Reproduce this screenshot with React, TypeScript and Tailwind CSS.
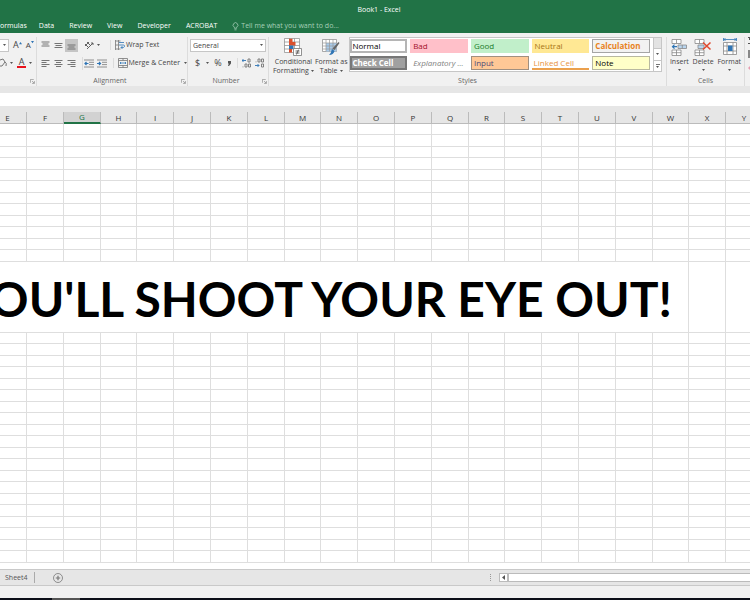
import type { ReactNode } from "react";

const TABS = ["Data", "Review", "View", "Developer", "ACROBAT"];
const COLUMNS = "EFGHIJKLMNOPQRSTUVWXY".split("");

const COL_WIDTHS = ["w-[37px]", "w-[37px]", "w-[37px]", "w-[36px]", "w-[37px]"];

function Caret() {
  return (
    <svg viewBox="0 0 5 3" className="h-[2px] w-[3px] shrink-0" aria-hidden="true">
      <path d="M0 0h5L2.5 3z" fill="#555" />
    </svg>
  );
}

function Launcher() {
  return (
    <button aria-label="More options" className="w-[6px]">
      <svg viewBox="0 0 6 6" className="size-[5px]" fill="none" stroke="#777" strokeWidth=".7">
        <path d="M.5 4.5v-4h4M2.5 2.5l2.5 2.5M5.3 2.5v2.8H2.5" />
      </svg>
    </button>
  );
}

function Lines({ rows, label, active }: { rows: string; label: string; active?: boolean }) {
  return (
    <button
      aria-label={label}
      className={`flex h-[13px] w-[13px] items-center justify-center ${active ? "bg-[#c5c5c5]" : ""}`}
    >
      <svg viewBox="0 0 9 9" className="size-[9px]" stroke="#666" strokeWidth=".9">
        <path d={rows} />
      </svg>
    </button>
  );
}

function Indent({ label, d }: { label: string; d: string }) {
  return (
    <button aria-label={label} className="flex h-[13px] w-[13px] items-center justify-center">
      <svg viewBox="0 0 10 9" className="h-[9px] w-[10px]" fill="none">
        <path d="M0 1h10M5 3.3h5M5 5.6h5M0 8h10" stroke="#777" strokeWidth=".8" />
        <path d={d} stroke="#2f75b5" strokeWidth="1.2" />
      </svg>
    </button>
  );
}

function GroupLabel({ children, launcher }: { children: ReactNode; launcher?: boolean }) {
  return (
    <div className="mt-auto flex h-[10px] items-center text-[#666]">
      <span className="flex-1 text-center">{children}</span>
      {launcher && <Launcher />}
    </div>
  );
}

function TitleBar() {
  return (
    <header className="bg-[#217346] text-white">
      <h1 className="h-[19px] pl-2 text-center leading-[20px]">Book1 - Excel</h1>
      <nav className="flex h-[14px] items-center whitespace-nowrap">
        <a href="#formulas" className="mr-3">ormulas</a>
        {TABS.map((tab) => (
          <a key={tab} href={`#${tab}`} className="mr-[15px]">
            {tab}
          </a>
        ))}
        <button className="flex items-center gap-[2px] text-[#a6cfb7]">
          <svg viewBox="0 0 8 10" className="h-[9px] w-[7px]" fill="none" stroke="currentColor" strokeWidth=".9">
            <path d="M2.7 7V5.8a2.7 2.7 0 1 1 2.6 0V7zM2.8 8.8h2.4" />
          </svg>
          Tell me what you want to do...
        </button>
      </nav>
    </header>
  );
}

function FontGroup() {
  return (
    <section className="flex w-[37px] shrink-0 flex-col border-r border-[#dcdcdc]">
      <div className="mt-px flex h-[14px] items-center">
        <button aria-label="Font size" className="mr-1 flex h-[13px] w-[9px] items-center justify-center border border-l-0 border-[#c6c6c6] bg-white">
          <Caret />
        </button>
        <button aria-label="Increase font size" className="mr-1 flex text-[9px]">
          A<svg viewBox="0 0 4 4" className="mt-[2px] size-[3px]" fill="#2f75b5"><path d="M0 3l2-3 2 3z" /></svg>
        </button>
        <button aria-label="Decrease font size" className="flex text-[8px]">
          A<svg viewBox="0 0 4 4" className="mt-[1px] size-[3px]" fill="#2f75b5"><path d="M0 0h4L2 3z" /></svg>
        </button>
      </div>
      <div className="mt-1 flex h-[14px] items-center gap-1">
        <button aria-label="Fill color" className="flex items-center gap-[3px]">
          <svg viewBox="0 0 7 10" className="h-[10px] w-[7px]" fill="none" stroke="#666" strokeWidth=".9">
            <path d="M0 2l3-1 2 3-3 4H0M5 4q2 1 1 4" />
          </svg>
          <Caret />
        </button>
        <button aria-label="Font color" className="flex items-center gap-[3px]">
          <span className="h-[10px] w-[9px] border-b-2 border-[#e8121d] text-center text-[9px] leading-[8px]">A</span>
          <Caret />
        </button>
      </div>
      <GroupLabel launcher>{null}</GroupLabel>
    </section>
  );
}

function AlignmentGroup() {
  return (
    <section className="flex w-[151px] shrink-0 flex-col border-r border-[#dcdcdc] pl-[2px]">
      <div className="mt-px flex h-[14px] items-center">
        <Lines label="Top align" rows="M.5 1h8M1.5 3h6M.5 5h8" />
        <Lines label="Middle align" rows="M.5 2.5h8M1.5 4.5h6M.5 6.5h8" />
        <Lines label="Bottom align" rows="M.5 4h8M1.5 6h6M.5 8h8" active />
        <button aria-label="Orientation" className="ml-1 flex w-[24px] items-center gap-[3px] pl-[2px]">
          <svg viewBox="0 0 10 9" className="h-[9px] w-[10px]" fill="none" stroke="#555" strokeWidth=".9">
            <path d="M1 3l3 3M3 1l4 4M1 5l4-4M3 8l6-6M9 4V2H7" />
          </svg>
          <Caret />
        </button>
        <button className="ml-1 flex items-center gap-px border-l border-[#dcdcdc] pl-1">
          <svg viewBox="0 0 10 10" className="size-[10px]" fill="none" stroke="#777" strokeWidth=".8">
            <path d="M.5 0v10M3.5 0v10M.5 1h5M.5 9h5M.5 5h3" />
            <path d="M4 2.5h5M4 5h4.5q1 0 1 1t-1 1.5H6M7.5 6L6 7.5 7.5 9" stroke="#2f75b5" />
          </svg>
          Wrap Text
        </button>
      </div>
      <div className="mt-1 flex h-[14px] items-center">
        <Lines label="Align left" rows="M.5 1.5h8M.5 3.5h5M.5 5.5h8M.5 7.5h5" />
        <Lines label="Center" rows="M.5 1.5h8M2 3.5h5M.5 5.5h8M2 7.5h5" />
        <Lines label="Align right" rows="M.5 1.5h8M3.5 3.5h5M.5 5.5h8M3.5 7.5h5" />
        <span className="ml-1 flex border-l border-[#dcdcdc]">
          <Indent label="Decrease indent" d="M4.5 4.5H1M2.5 3L1 4.5 2.5 6" />
          <Indent label="Increase indent" d="M0 4.5h3.5M2 3l1.5 1.5L2 6" />
        </span>
        <button className="ml-1 flex items-center gap-px border-l border-[#dcdcdc] pl-1">
          <svg viewBox="0 0 10 10" className="size-[10px]" fill="none" stroke="#777" strokeWidth=".8">
            <path d="M.5.5h9v9h-9zM5 .5v2M5 7.5v2M.5 2.5h9M.5 7.5h9" />
            <path d="M2 5h6M3 4L2 5l1 1M7 4l1 1-1 1" stroke="#2f75b5" />
          </svg>
          Merge &amp; Center
        </button>
        <button aria-label="Merge options" className="ml-1"><Caret /></button>
      </div>
      <GroupLabel launcher>Alignment</GroupLabel>
    </section>
  );
}

function NumberGroup() {
  return (
    <section className="flex w-[81px] shrink-0 flex-col border-r border-[#dcdcdc] pl-[2px]">
      <div className="relative mt-px mr-[2px] flex h-[14px] items-center">
        <select aria-label="Number format" className="h-[13px] w-full appearance-none border border-[#c6c6c6] bg-white pl-[2px] leading-[11px]">
          <option>General</option>
        </select>
        <span className="pointer-events-none absolute right-[3px] flex"><Caret /></span>
      </div>
      <div className="mt-1 flex h-[14px] items-center pl-[5px] text-[9px]">
        <button>$</button>
        <button aria-label="Currency options" className="ml-[6px]"><Caret /></button>
        <button className="ml-[5px]">%</button>
        <button aria-label="Comma style" className="ml-[6px]">
          <svg viewBox="0 0 3 5" className="h-[5px] w-[3px]"><path d="M0 0h3v2.500L1 5H0l.8-2.500H0z" fill="#555" /></svg>
        </button>
        <button aria-label="Increase decimal" className="ml-auto flex border-l border-[#dcdcdc] pl-1">
          <svg viewBox="0 0 9 10" className="h-[10px] w-[9px]" fill="none" stroke="#777" strokeWidth=".9">
            <path d="M0 2.5h4M1.5 1L0 2.5 1.5 4" stroke="#2f75b5" />
            <path d="M6 1h2v3H6zM3 6h2v3H3zM6.5 6h2v3h-2zM1 8.5v.8" />
          </svg>
        </button>
        <button aria-label="Decrease decimal" className="mx-1">
          <svg viewBox="0 0 9 10" className="h-[10px] w-[9px]" fill="none" stroke="#777" strokeWidth=".9">
            <path d="M3 1h2v3H3zM6.5 1h2v3h-2zM6.5 6h2v3h-2zM1 3.5v.8" />
            <path d="M0 7.5h4M2.5 6L4 7.5 2.5 9" stroke="#2f75b5" />
          </svg>
        </button>
      </div>
      <GroupLabel launcher>Number</GroupLabel>
    </section>
  );
}

function BigButton({ icon, lines, caret }: { icon: ReactNode; lines: string[]; caret?: boolean }) {
  return (
    <button className="flex shrink-0 flex-col items-center whitespace-nowrap">
      <span className="flex h-[20px] items-center">{icon}</span>
      {lines.map((line, i) => (
        <span key={line} className="flex h-[9px] items-center gap-[2px] leading-[9px]">
          {line}
          {!caret && i === lines.length - 1 && <Caret />}
        </span>
      ))}
      {caret && <span className="flex h-2 items-center"><Caret /></span>}
    </button>
  );
}

const ConditionalIcon = (
  <svg viewBox="0 0 18 18" className="size-[18px]">
    <path d="M.5.5h15v14H.5zM5.5.5v14M10.5.5v14M.5 4h15M.5 7.5h15M.5 11h15" fill="#fff" stroke="#888" strokeWidth=".7" />
    <path d="M5 .8h3.500v3.200H5zM5 4h6.500v3.500H5z" fill="#d9502e" />
    <path d="M5 7.500h4.500V11H5z" fill="#2f75b5" />
    <path d="M5 11h3v3.500H5z" fill="#d9502e" />
    <path d="M9.5 10.500h8v7h-8z" fill="#fff" stroke="#777" strokeWidth=".8" />
    <path d="M11.5 13h4M11.5 15h4M14.5 11.7l-2 4.800" stroke="#444" strokeWidth=".8" />
  </svg>
);

const FormatTableIcon = (
  <svg viewBox="0 0 18 18" className="size-[18px]">
    <path d="M.5 1.5h14v12H.5z" fill="#fff" stroke="#888" strokeWidth=".7" />
    <path d="M4 5h10.5v8.500H4z" fill="#a9cbea" />
    <path d="M4 1.5v12M7.5 1.5v12M11 1.5v12M.5 5h14M.5 8h14M.5 11h14" stroke="#999" strokeWidth=".7" />
    <path d="M16.500 4l1 1-5 7-2-1.500z" fill="#666" />
    <path d="M10 11l2.500 2q-1 4-5.500 4 2-1.500 3-6z" fill="#2f75b5" />
  </svg>
);

const InsertIcon = (
  <svg viewBox="0 0 16 17" className="h-[17px] w-4" fill="none" stroke="#888" strokeWidth=".8">
    <path d="M1 .5h9v4H1zM5.5.5v4M1 11h9v5.500H1zM5.500 11v5.500M1 13.700h9" fill="#fff" />
    <path d="M7 6h8.500v3.500H7zM11.300 6v3.500" fill="#b9d5ee" />
    <path d="M6 7.700H1.500M3.500 5.700l-2 2 2 2" stroke="#2f75b5" strokeWidth="1.200" />
  </svg>
);

const DeleteIcon = (
  <svg viewBox="0 0 18 17" className="h-[17px] w-[18px]" fill="none" stroke="#888" strokeWidth=".8">
    <path d="M1 .5h9v4H1zM5.5.5v4M1 11h9v5.500H1zM5.500 11v5.500M1 13.700h9" fill="#fff" />
    <path d="M4 6h6v3.500H4z" fill="#b9d5ee" />
    <path d="M9 3.500l7.500 7M16.500 3.500L9 10.500" stroke="#e0492f" strokeWidth="1.600" />
  </svg>
);

const FormatIcon = (
  <svg viewBox="0 0 17 18" className="h-[18px] w-[17px]" fill="none" stroke="#888" strokeWidth=".8">
    <path d="M2.500 4.500h13v12h-13zM6 4.500v12M12 4.500v12M2.500 8h13M2.500 13h13" fill="#fff" />
    <path d="M7 7.500h4.500V13H7z" fill="#2f75b5" stroke="none" />
    <path d="M3 1.500h12M4.500 0L3 1.500 4.500 3M13.500 0L15 1.500 13.500 3M2.500 0v3M15.500 0v3" stroke="#2f75b5" />
  </svg>
);

const STYLES = [
  { name: "Normal", look: "border-2 border-[#b5b5b5] bg-white text-black" },
  { name: "Bad", look: "border-2 border-[#ffc0c9] bg-[#ffc0c9] text-[#a3122a]" },
  { name: "Good", look: "border-2 border-[#c1efca] bg-[#c1efca] text-[#197a2a]" },
  { name: "Neutral", look: "border-2 border-[#ffe894] bg-[#ffe894] text-[#a87514]" },
  { name: "Calculation", look: "border border-[#a5a5a5] bg-[#f2f2f2] pl-[2px] font-bold text-[#e8821e]" },
  { name: "Check Cell", look: "border-2 border-[#777] bg-[#a0a0a0] font-bold text-white" },
  { name: "Explanatory ...", look: "border-2 border-white text-[#7f7f7f] italic" },
  { name: "Input", look: "border border-[#a08f80] bg-[#ffc896] pl-[2px] text-[#4e4a78]" },
  { name: "Linked Cell", look: "border-y-2 border-t-white border-b-[#eba04d] pl-[2px] text-[#e8933e]" },
  { name: "Note", look: "border border-[#b8b8a0] bg-[#ffffc8] pl-[2px] text-black" },
];

function StylesGroup() {
  return (
    <section className="flex min-w-0 flex-1 flex-col border-r border-[#dcdcdc]">
      <div className="flex gap-px pl-1">
        <BigButton icon={ConditionalIcon} lines={["Conditional", "Formatting"]} />
        <BigButton icon={FormatTableIcon} lines={["Format as", "Table"]} />
        <div className="mr-1 flex h-[35px] min-w-0 flex-1 border border-[#c6c6c6] bg-white">
          <div className="grid min-w-0 flex-1 grid-cols-5 content-start gap-x-[3px] gap-y-[3px] pt-px pr-[3px]">
            {STYLES.map((s) => (
              <button key={s.name} className={`h-[14px] truncate px-px text-left text-[8px] leading-[10px] ${s.look}`}>
                {s.name}
              </button>
            ))}
          </div>
          <div className="flex w-[8px] flex-col divide-y divide-[#c6c6c6] border-l border-[#c6c6c6]">
            <button aria-label="Scroll up" className="flex flex-1 items-center justify-center bg-[#e3e3e3]" />
            <button aria-label="Scroll down" className="flex flex-1 items-center justify-center"><Caret /></button>
            <button aria-label="More styles" className="flex flex-1 flex-col items-center justify-center gap-px">
              <span className="h-px w-1 bg-[#777]" />
              <Caret />
            </button>
          </div>
        </div>
      </div>
      <GroupLabel>Styles</GroupLabel>
    </section>
  );
}

function Ribbon() {
  return (
    <div className="flex h-[53px] bg-[#f1f1f1] pt-1 whitespace-nowrap text-[#444]">
      <FontGroup />
      <AlignmentGroup />
      <NumberGroup />
      <StylesGroup />
      <section className="flex w-[78px] shrink-0 flex-col border-r border-[#dcdcdc]">
        <div className="flex justify-around px-px">
          <BigButton icon={InsertIcon} lines={["Insert"]} caret />
          <BigButton icon={DeleteIcon} lines={["Delete"]} caret />
          <BigButton icon={FormatIcon} lines={["Format"]} caret />
        </div>
        <GroupLabel>Cells</GroupLabel>
      </section>
      <div className="flex w-[5px] shrink-0 justify-end">
        <svg viewBox="0 0 2 36" className="h-[36px] w-[2px]" aria-hidden="true">
          <path d="M0 0h2v1H0zM0 6h2v1H0zM1 1h1v2H1z" fill="#555" />
          <path d="M0 13h2v8H0z" fill="#888" />
          <path d="M0 31l2-2v4z" fill="#e79bb0" />
        </svg>
      </div>
    </div>
  );
}

function EmptyRows({ count }: { count: number }) {
  return Array.from({ length: count }, (_, i) => (
    <tr key={i} className="h-[11px] even:h-[12px]">
      {COLUMNS.map((c) => (
        <td key={c} className="border-r border-b border-[#dedede]" />
      ))}
    </tr>
  ));
}

function Sheet() {
  return (
    <div className="flex-1 overflow-hidden bg-white">
      <table className="w-[763px] min-w-full table-fixed border-separate border-spacing-0">
        <colgroup>
          {COLUMNS.map((c, i) => (
            <col key={c} className={i === 0 ? "w-[27px]" : COL_WIDTHS[i % 5]} />
          ))}
        </colgroup>
        <thead>
          <tr className="h-[12px] bg-[#e6e6e6] text-[8px] leading-[10px] text-[#333]">
            {COLUMNS.map((c) => (
              <th
                key={c}
                className={`border-r p-0 font-normal first:pr-[11px] ${
                  c === "G"
                    ? "border-b-2 border-r-[#bbb] border-b-[#217346] bg-[#d2d2d2] text-[#217346]"
                    : "border-b border-[#bbb]"
                }`}
              >
                {c}
              </th>
            ))}
          </tr>
        </thead>
        <tbody>
          <EmptyRows count={12} />
        </tbody>
        <tbody>
          <tr className="h-[71px]">
            <td colSpan={19} className="border-r border-b border-[#dedede] p-0 pr-4">
              <div className="flex justify-end pt-1 font-['Lato',sans-serif] text-[48px] leading-[66px] font-bold whitespace-nowrap text-black">
                OU'LL SHOOT YOUR EYE OUT!
              </div>
            </td>
            <td className="border-r border-b border-[#dedede]" />
            <td className="border-r border-b border-[#dedede]" />
          </tr>
        </tbody>
        <tbody>
          <EmptyRows count={20} />
        </tbody>
      </table>
    </div>
  );
}

function SheetBar() {
  return (
    <footer>
      <div className="flex h-[17px] items-center border-y border-[#c9c9c9] bg-[#e6e6e6] text-[#555]">
        <button className="h-[11px] border-r border-[#aaa] pr-[6px] pl-[5px]">Sheet4</button>
        <button aria-label="New sheet" className="ml-[18px]">
          <svg viewBox="0 0 10 10" className="size-[10px]" fill="none" stroke="#777" strokeWidth=".8">
            <circle cx="5" cy="5" r="4.5" />
            <path d="M5 2.800v4.400M2.800 5h4.400" strokeWidth="1.200" />
          </svg>
        </button>
        <div className="ml-auto flex w-[260px] items-center">
          <span className="mr-2 h-[7px] border-l border-dotted border-[#999]" />
          <button aria-label="Scroll left" className="flex h-[9px] w-[9px] items-center justify-center border border-[#bbb] bg-white">
            <svg viewBox="0 0 3 5" className="h-[5px] w-[3px]"><path d="M3 0v5L0 2.5z" fill="#555" /></svg>
          </button>
          <div className="h-[9px] flex-1 border border-r-0 border-[#bbb] bg-white" />
        </div>
      </div>
      <div className="h-[12px] bg-[#f1f1f1]" />
      <div className="flex h-[2px] bg-[#0c0f18]">
        <div className="ml-[52px] w-7 bg-[#555]" />
      </div>
    </footer>
  );
}

export default function App() {
  return (
    <div className="flex h-screen flex-col overflow-hidden bg-[#e6e6e6] font-['Open_Sans',sans-serif] text-[7px] leading-[10px]">
      <TitleBar />
      <Ribbon />
      <div className="pt-[7px] pb-[6px]">
        <input aria-label="Formula bar" className="block h-[13px] w-full bg-white px-1" />
      </div>
      <Sheet />
      <SheetBar />
    </div>
  );
}
